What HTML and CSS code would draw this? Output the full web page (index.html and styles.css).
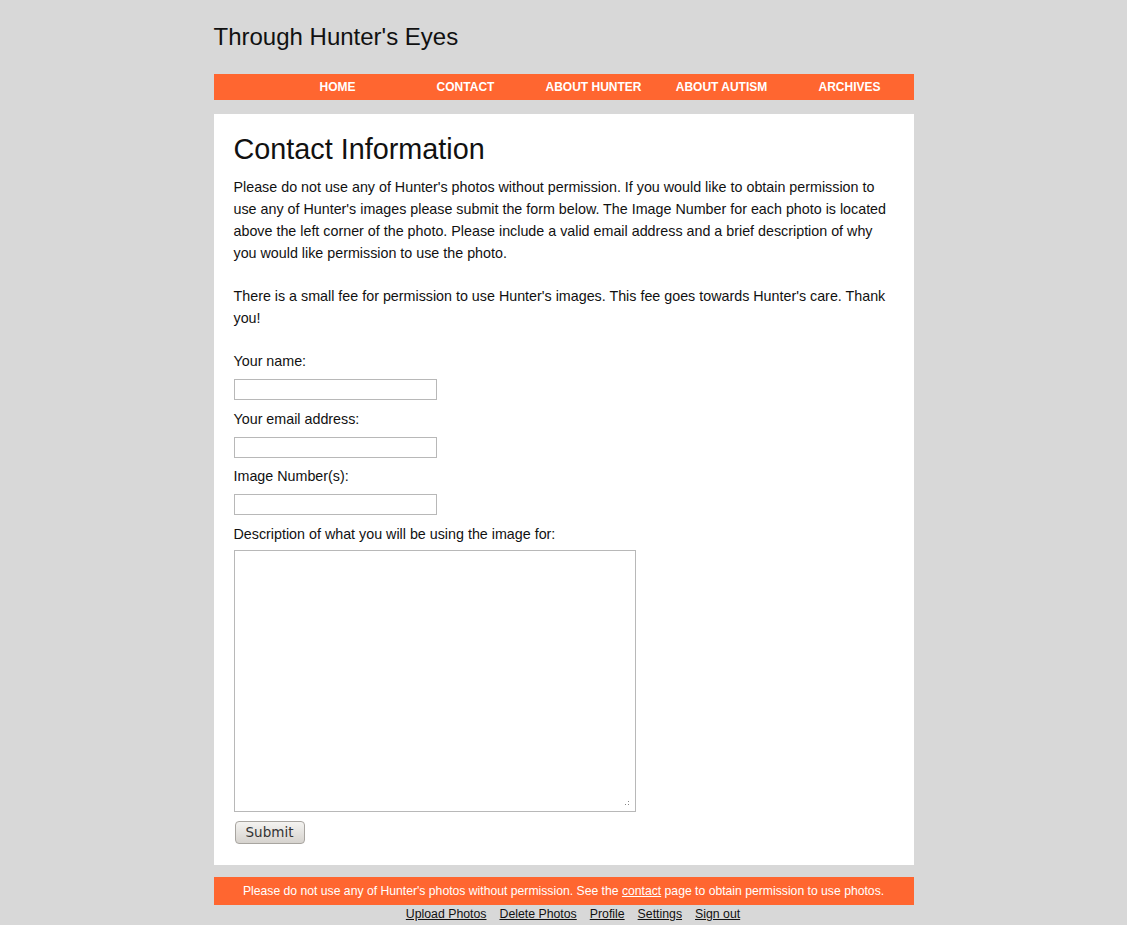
FILE: index.html
```html
<!DOCTYPE html>
<html>
<head>
<meta charset="utf-8">
<title>Through Hunter's Eyes - Contact</title>
<link rel="stylesheet" href="styles.css">
</head>
<body>
<div class="page">
  <header class="site-header">
    <h1 class="site-title">Through Hunter's Eyes</h1>
  </header>
  <nav class="main-nav">
    <ul>
      <li><a href="#">HOME</a></li>
      <li><a href="#">CONTACT</a></li>
      <li><a href="#">ABOUT HUNTER</a></li>
      <li><a href="#">ABOUT AUTISM</a></li>
      <li><a href="#">ARCHIVES</a></li>
    </ul>
  </nav>
  <main class="content">
    <h2 class="page-title">Contact Information</h2>
    <p>Please do not use any of Hunter's photos without permission. If you would like to obtain permission to use any of Hunter's images please submit the form below. The Image Number for each photo is located above the left corner of the photo. Please include a valid email address and a brief description of why you would like permission to use the photo.</p>
    <p>There is a small fee for permission to use Hunter's images. This fee goes towards Hunter's care. Thank you!</p>
    <form class="contact-form">
      <label for="name">Your name:</label>
      <input type="text" id="name" class="field">
      <label for="email">Your email address:</label>
      <input type="text" id="email" class="field">
      <label for="imgnum">Image Number(s):</label>
      <input type="text" id="imgnum" class="field">
      <label for="desc">Description of what you will be using the image for:</label>
      <div class="area-wrap">
        <textarea id="desc" class="area"></textarea>
        <span class="grip"></span>
      </div>
      <button type="button" class="submit">Submit</button>
    </form>
  </main>
  <footer class="site-footer">
    <div class="notice">Please do not use any of Hunter's photos without permission. See the <a href="#">contact</a> page to obtain permission to use photos.</div>
    <div class="admin-links">
      <a href="#">Upload Photos</a>
      <a href="#">Delete Photos</a>
      <a href="#">Profile</a>
      <a href="#">Settings</a>
      <a href="#">Sign out</a>
    </div>
  </footer>
</div>
</body>
</html>
```
FILE: styles.css
```css
html, body {
  margin: 0;
  padding: 0;
  background: #d8d8d8;
  font-family: "Liberation Sans", Arial, sans-serif;
  color: #111;
}
.page {
  width: 700px;
  margin: 0 auto;
}
.site-header {
  height: 74px;
  display: flex;
  align-items: center;
}
.site-title {
  margin: 0;
  font-size: 24px;
  font-weight: normal;
  line-height: 28px;
  color: #111;
}
.main-nav {
  background: #ff6630;
  height: 26px;
}
.main-nav ul {
  list-style: none;
  margin: 0 0 0 60px;
  padding: 0;
  display: flex;
}
.main-nav li {
  width: 128px;
  text-align: center;
}
.main-nav a {
  color: #fff;
  text-decoration: none;
  font-weight: bold;
  font-size: 12px;
  line-height: 26px;
  display: block;
}
.content {
  background: #fff;
  margin-top: 14px;
  padding: 20px 20px 21px;
}
.page-title {
  margin: 0 0 12px;
  font-size: 28.8px;
  font-weight: normal;
  line-height: 30px;
}
.content p {
  margin: 0 0 21px;
  font-size: 14.3px;
  line-height: 22px;
}
.contact-form {
  display: flex;
  flex-direction: column;
  align-items: flex-start;
  margin-top: 21px;
}
.contact-form label {
  font-size: 14.3px;
  line-height: 22px;
}
.field {
  box-sizing: border-box;
  width: 203px;
  height: 21px;
  margin: 7px 0 7.5px;
  border: 1px solid #b8b8b8;
  padding: 0 2px;
  background: #fff;
}
.area-wrap {
  position: relative;
  margin: 5px 0 0;
  line-height: 0;
}
.area {
  box-sizing: border-box;
  width: 402px;
  height: 262px;
  margin: 0;
  border: 1px solid #b8b8b8;
  background: #fff;
  resize: none;
  display: block;
}
.grip {
  position: absolute;
  right: 7px;
  bottom: 7px;
  width: 4px;
  height: 4px;
  background:
    linear-gradient(#888, #888) 3px 0 / 1px 1px no-repeat,
    linear-gradient(#888, #888) 0 3px / 1px 1px no-repeat,
    linear-gradient(#888, #888) 3px 3px / 1px 1px no-repeat;
}
.submit {
  margin: 9px 0 0 1px;
  width: 70px;
  height: 23px;
  border: 1px solid #a8a5a0;
  border-radius: 4px;
  background: linear-gradient(#f4f3f1, #d6d3ce);
  font-family: "DejaVu Sans", sans-serif;
  font-size: 13.5px;
  color: #333;
  padding: 0;
}
.site-footer {
  margin-top: 12px;
}
.notice {
  background: #ff6630;
  color: #fff;
  font-size: 12.2px;
  height: 28px;
  line-height: 28px;
  text-align: center;
}
.notice a {
  color: #fff;
}
.admin-links {
  display: flex;
  justify-content: center;
  gap: 13px;
  padding-left: 19px;
  font-size: 12.3px;
  line-height: 19px;
}
.admin-links a {
  color: #111;
}
```
